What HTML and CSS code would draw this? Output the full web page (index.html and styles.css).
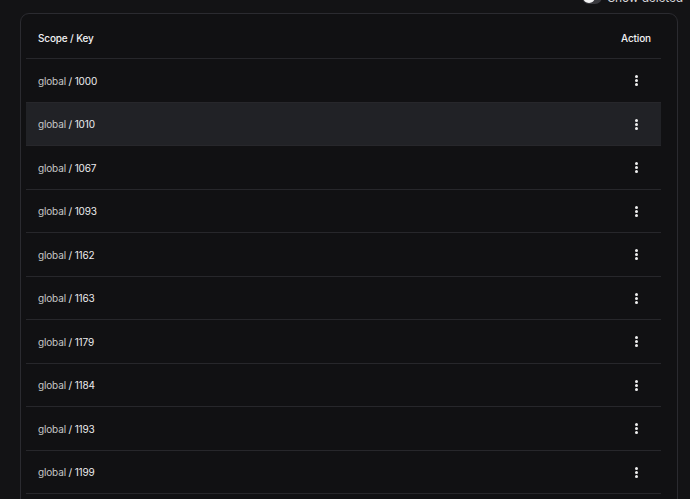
FILE: index.html
```html
<!DOCTYPE html>
<html lang="en">
<head>
<meta charset="utf-8">
<title>Scope / Key</title>
<link rel="stylesheet" href="styles.css">
</head>
<body>
<div class="page">
  <div class="toolbar">
    <label class="toggle">
      <span class="track"><span class="knob"></span></span>
      <span class="toggle-label">Show deleted</span>
    </label>
  </div>
  <div class="card">
    <div class="table">
      <div class="row head">
        <div class="cell key">Scope / Key</div>
        <div class="cell action"><span class="action-box">Action</span></div>
      </div>
      <div class="row"><div class="cell key"><span class="scope">global</span> / 1000</div><div class="cell action"><span class="action-box"><span class="dots"><i></i><i></i><i></i></span></span></div></div>
      <div class="row hover"><div class="cell key"><span class="scope">global</span> / 1010</div><div class="cell action"><span class="action-box"><span class="dots"><i></i><i></i><i></i></span></span></div></div>
      <div class="row"><div class="cell key"><span class="scope">global</span> / 1067</div><div class="cell action"><span class="action-box"><span class="dots"><i></i><i></i><i></i></span></span></div></div>
      <div class="row"><div class="cell key"><span class="scope">global</span> / 1093</div><div class="cell action"><span class="action-box"><span class="dots"><i></i><i></i><i></i></span></span></div></div>
      <div class="row"><div class="cell key"><span class="scope">global</span> / 1162</div><div class="cell action"><span class="action-box"><span class="dots"><i></i><i></i><i></i></span></span></div></div>
      <div class="row"><div class="cell key"><span class="scope">global</span> / 1163</div><div class="cell action"><span class="action-box"><span class="dots"><i></i><i></i><i></i></span></span></div></div>
      <div class="row"><div class="cell key"><span class="scope">global</span> / 1179</div><div class="cell action"><span class="action-box"><span class="dots"><i></i><i></i><i></i></span></span></div></div>
      <div class="row"><div class="cell key"><span class="scope">global</span> / 1184</div><div class="cell action"><span class="action-box"><span class="dots"><i></i><i></i><i></i></span></span></div></div>
      <div class="row"><div class="cell key"><span class="scope">global</span> / 1193</div><div class="cell action"><span class="action-box"><span class="dots"><i></i><i></i><i></i></span></span></div></div>
      <div class="row"><div class="cell key"><span class="scope">global</span> / 1199</div><div class="cell action"><span class="action-box"><span class="dots"><i></i><i></i><i></i></span></span></div></div>
      <div class="row"><div class="cell key"><span class="scope">global</span> / 1200</div><div class="cell action"><span class="action-box"><span class="dots"><i></i><i></i><i></i></span></span></div></div>
    </div>
  </div>
</div>
</body>
</html>
```
FILE: styles.css
```css
* { box-sizing: border-box; }
html, body {
  margin: 0;
  padding: 0;
  background: #131315;
  height: 100%;
  overflow: hidden;
}
body {
  font-family: Inter, "Noto Sans", sans-serif;
  font-size: 10px;
  letter-spacing: -0.15px;
  color: #ececee;
}
.page {
  padding: 0 12px 0 20px;
}
.toolbar {
  display: flex;
  justify-content: flex-end;
  align-items: flex-start;
  height: 24px;
  margin-top: -11px;
  margin-right: -5px;
}
.toggle {
  display: flex;
  align-items: center;
  gap: 5px;
  height: 16px;
}
.track {
  width: 20px;
  height: 14px;
  border-radius: 7px;
  background: #3a3a3f;
  position: relative;
  display: block;
}
.knob {
  position: absolute;
  left: 1px;
  top: 1px;
  width: 12px;
  height: 12px;
  border-radius: 50%;
  background: #f2f2f2;
}
.toggle-label {
  font-size: 12px;
  color: #d8d8dc;
}
.card {
  border: 1px solid #2b2b30;
  border-radius: 9px;
  background: #111113;
  padding: 0 16px 0 5px;
  height: 520px;
}
.table {
  display: flex;
  flex-direction: column;
}
.row {
  display: flex;
  align-items: center;
  justify-content: space-between;
  height: 44px;
  border-bottom: 1px solid #27272b;
}
.row:nth-child(odd) {
  height: 43px;
}
.row.head {
  height: 45px;
  padding-top: 4px;
  color: #f2f2f3;
  font-weight: 500;
}
.row.hover {
  background: #212226;
}
.cell {
  padding: 0 12px;
  white-space: nowrap;
}
.scope {
  color: #c6c6c6;
}
.action-box {
  display: flex;
  justify-content: center;
  width: 29px;
  padding-left: 3px;
}
.dots {
  display: flex;
  flex-direction: column;
  gap: 1px;
}
.dots i {
  display: block;
  width: 3px;
  height: 3px;
  border-radius: 50%;
  background: #f0f0f0;
}
```
